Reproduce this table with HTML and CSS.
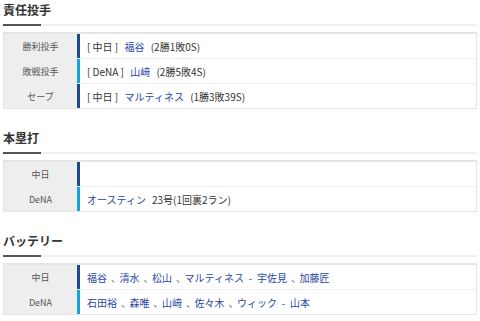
FILE: index.html
```html
<!DOCTYPE html>
<html lang="ja">
<head>
<meta charset="utf-8">
<link rel="stylesheet" href="styles.css">
</head>
<body>
<section class="sec">
  <h2 class="ttl">責任投手</h2>
  <div class="tbl">
    <div class="row"><div class="lbl">勝利投手</div><div class="val cd">[ 中日 ] <a>福谷</a> (2勝1敗0S)</div></div>
    <div class="row"><div class="lbl">敗戦投手</div><div class="val db">[ DeNA ] <a>山﨑</a> (2勝5敗4S)</div></div>
    <div class="row"><div class="lbl">セーブ</div><div class="val cd">[ 中日 ] <a>マルティネス</a> (1勝3敗39S)</div></div>
  </div>
</section>
<section class="sec">
  <h2 class="ttl">本塁打</h2>
  <div class="tbl">
    <div class="row"><div class="lbl">中日</div><div class="val cd"></div></div>
    <div class="row"><div class="lbl">DeNA</div><div class="val db list"><a class="hr">オースティン</a><span>23号(1回裏2ラン)</span></div></div>
  </div>
</section>
<section class="sec">
  <h2 class="ttl">バッテリー</h2>
  <div class="tbl">
    <div class="row"><div class="lbl">中日</div><div class="val cd list"><a>福谷</a><span class="sep">、</span><a>清水</a><span class="sep">、</span><a>松山</a><span class="sep">、</span><a>マルティネス</a><span class="sep dash">-</span><a>宇佐見</a><span class="sep">、</span><a>加藤匠</a></div></div>
    <div class="row"><div class="lbl">DeNA</div><div class="val db list"><a>石田裕</a><span class="sep">、</span><a>森唯</a><span class="sep">、</span><a>山﨑</a><span class="sep">、</span><a>佐々木</a><span class="sep">、</span><a>ウィック</a><span class="sep dash">-</span><a>山本</a></div></div>
  </div>
</section>
</body>
</html>
```

FILE: styles.css
```css
* { box-sizing: border-box; }
body {
  margin: 0;
  padding: 2px 3px 0;
  background: #fff;
  font-family: "Noto Sans CJK JP", "Noto Sans", sans-serif;
  color: #333;
}
.sec { margin-bottom: 21px; }
.ttl {
  position: relative;
  margin: 0 0 6px;
  font-size: 12px;
  font-weight: bold;
  line-height: 16px;
  padding: 0 0 6px;
  border-bottom: 2px solid #f0f0f0;
}
.ttl::after {
  content: "";
  position: absolute;
  left: 0;
  bottom: -2px;
  width: 38px;
  height: 2px;
  background: #555;
}
.tbl {
  border: 1px solid #e4e4e4;
  border-top-width: 2px;
  font-size: 10px;
}
.row {
  display: grid;
  grid-template-columns: 73px 1fr;
  height: 25px;
  border-top: 1px solid #efefef;
}
.row:first-child { border-top: 0; height: 24px; }
.lbl {
  background: #eee;
  color: #555;
  font-size: 9px;
  display: flex;
  align-items: center;
  justify-content: center;
}
.val {
  display: flex;
  align-items: center;
  white-space: pre;
  padding-left: 7px;
  border-left: 3px solid #1b4a90;
  color: #333;
}
.val.db { border-left-color: #15a0e0; }
.val a { color: #2a47a8; text-decoration: none; margin: 0 4px; }
.val.list a { margin: 0; }
.val.list a.hr { margin-right: 6px; }
.sep {
  flex: none;
  width: 12.5px;
  padding-left: 4px;
  overflow: visible;
  color: #666;
}
.sep.dash {
  width: 13px;
  padding-left: 0;
  text-align: center;
  color: #2a47a8;
}
```
